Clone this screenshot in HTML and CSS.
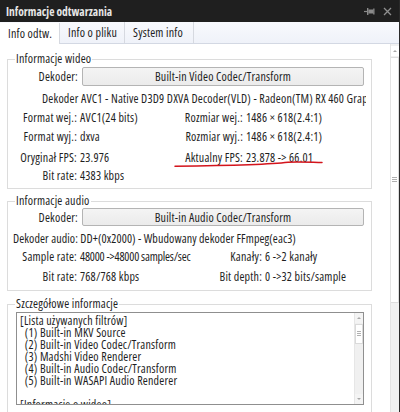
FILE: index.html
```html
<!DOCTYPE html>
<html lang="pl">
<head>
<meta charset="utf-8">
<link rel="stylesheet" href="styles.css">
</head>
<body>
<div class="win">
  <div class="titlebar">
    <span class="title">Informacje odtwarzania</span>
    <span class="tb-icons">
      <svg class="pin" width="12" height="9" viewBox="0 0 12 9"><path d="M0 4.5H3" stroke="#8a8a8a" stroke-width="1.2"/><rect x="3" y="1" width="1.4" height="7" fill="#8a8a8a"/><rect x="4.4" y="2.5" width="5" height="4" fill="#8a8a8a"/><rect x="9.2" y="1.5" width="1.3" height="6" fill="#8a8a8a"/></svg>
      <svg class="close" width="9" height="9" viewBox="0 0 9 9"><path d="M1 1L8 8M8 1L1 8" stroke="#8f8f8f" stroke-width="1.3"/></svg>
    </span>
  </div>
  <div class="tabs">
    <div class="tab active">Info odtw.</div>
    <div class="tab">Info o pliku</div>
    <div class="tab">System info</div>
    <div class="tab-fill"></div>
  </div>
  <div class="main">
    <div class="content">
      <fieldset class="group video">
        <legend>Informacje wideo</legend>
        <div class="dec-row">
          <span class="dec-lbl">Dekoder:</span>
          <div class="btn">Built-in Video Codec/Transform</div>
        </div>
        <div class="line-full vline">Dekoder AVC1 - Native D3D9 DXVA Decoder(VLD) - Radeon(TM) RX 460 Graphics</div>
        <div class="pair">
          <div class="cell-l"><span class="lbl">Format wej.:</span><span class="val">AVC1(24 bits)</span></div>
          <div class="cell-r v"><span class="lbl">Rozmiar wej.:</span><span class="val">1486 × 618(2.4:1)</span></div>
        </div>
        <div class="pair">
          <div class="cell-l"><span class="lbl">Format wyj.:</span><span class="val">dxva</span></div>
          <div class="cell-r v"><span class="lbl">Rozmiar wyj.:</span><span class="val">1486 × 618(2.4:1)</span></div>
        </div>
        <div class="pair fps">
          <div class="cell-l"><span class="lbl">Oryginał FPS:</span><span class="val">23.976</span></div>
          <div class="cell-r v"><span class="lbl">Aktualny FPS:</span><span class="val">23.878 -&gt; 66.01</span></div>
        </div>
        <div class="pair short">
          <div class="cell-l"><span class="lbl">Bit rate:</span><span class="val">4383 kbps</span></div>
        </div>
      </fieldset>

      <fieldset class="group audio">
        <legend>Informacje audio</legend>
        <div class="dec-row a">
          <span class="dec-lbl">Dekoder:</span>
          <div class="btn">Built-in Audio Codec/Transform</div>
        </div>
        <div class="line-full aline">Dekoder audio: DD+(0x2000) - Wbudowany dekoder FFmpeg(eac3)</div>
        <div class="pair short">
          <div class="cell-l"><span class="lbl">Sample rate:</span><span class="val tight">48000 -&gt;48000 samples/sec</span></div>
          <div class="cell-r au"><span class="lbl">Kanały:</span><span class="val">6 -&gt;2 kanały</span></div>
        </div>
        <div class="pair short last">
          <div class="cell-l"><span class="lbl">Bit rate:</span><span class="val">768/768 kbps</span></div>
          <div class="cell-r au"><span class="lbl">Bit depth:</span><span class="val">0 -&gt;32 bits/sample</span></div>
        </div>
      </fieldset>

      <fieldset class="group details">
        <legend>Szczegółowe informacje</legend>
        <div class="listbox">
          <div class="list-text">[Lista używanych filtrów]
  (1) Built-in MKV Source
  (2) Built-in Video Codec/Transform
  (3) Madshi Video Renderer
  (4) Built-in Audio Codec/Transform
  (5) Built-in WASAPI Audio Renderer

[Informacje o wideo]</div>
          <div class="lscroll">
            <div class="arrow up"></div>
            <div class="lthumb"><span class="grip"></span></div>
            <div class="ltrack"></div>
            <div class="arrow down"></div>
          </div>
        </div>
      </fieldset>

      <svg class="underline" width="160" height="14" viewBox="0 0 160 14"><path d="M5 11.2 C 60 10.5, 100 9.5, 118 7.2 C 130 6.6, 142 7.4, 152 7.6" fill="none" stroke="#d3141c" stroke-width="1.5" stroke-linecap="round"/></svg>
    </div>
    <div class="vscroll">
      <div class="arrow up"></div>
      <div class="thumb"><span class="grip"></span></div>
      <div class="track"></div>
    </div>
  </div>
</div>
</body>
</html>
```
FILE: styles.css
```css
* { box-sizing: border-box; }
html, body { margin: 0; padding: 0; }
body {
  width: 400px;
  height: 412px;
  overflow: hidden;
  font-family: "Open Sans", "Noto Sans", sans-serif;
  font-size: 12px;
  font-stretch: 75%;
  letter-spacing: 0.2px;
  color: #1e1e1e;
  background: #fff;
}
.win {
  width: 400px;
  height: 412px;
  display: flex;
  flex-direction: column;
  border-right: 1px solid #2a2a2a;
  overflow: hidden;
}
.titlebar {
  height: 22px;
  flex: none;
  background: #1f1f1f;
  color: #e6e6e6;
  display: flex;
  align-items: center;
  justify-content: space-between;
  padding: 0 7px 0 6px;
}
.title { font-weight: 700; font-size: 11.5px; letter-spacing: 0; }
.tb-icons { display: flex; align-items: center; gap: 7px; }
.tabs {
  height: 22px;
  flex: none;
  display: flex;
  background: linear-gradient(#f8f9fd, #eff2f9);
  border-bottom: 1px solid #d3d8e3;
}
.tab {
  display: flex;
  align-items: center;
  padding: 0 0 0 8px;
  border-right: 1px solid #d6d9e0;
  color: #222;
}
.tab:nth-child(1) { width: 60px; }
.tab:nth-child(2) { width: 65px; }
.tab:nth-child(3) { width: 69px; }
.tab.active {
  background: #fff;
  margin-bottom: -1px;
  margin-top: 1px;
}
.tab-fill { flex: 1; }
.main { flex: 1; display: flex; min-height: 0; }
.content {
  flex: 1;
  position: relative;
  padding: 8px 0 0 7px;
  overflow: hidden;
}
.group {
  width: 365px;
  margin: 0;
  padding: 0;
  border: 1px solid #dcdcdc;
  min-width: 0;
}
.group legend {
  margin-left: 7px;
  padding: 0 1px;
  line-height: 14px;
  color: #1e1e1e;
}
.audio { margin-top: 5px; }
.details { margin-top: 6px; }

.dec-row { display: flex; align-items: center; margin-top: 1px; height: 19px; }
.dec-row.a { margin-top: 0; height: 18px; }
.dec-lbl { width: 70px; flex: none; text-align: right; margin-right: 4px; }
.btn {
  width: 282px;
  flex: none;
  height: 100%;
  border: 1px solid #b4b4b4;
  border-radius: 2px;
  background: linear-gradient(#f4f4f4, #ebebeb);
  display: flex;
  align-items: center;
  justify-content: center;
  color: #1e1e1e;
}
.line-full {
  white-space: nowrap;
  overflow: hidden;
  display: flex;
  align-items: center;
}
.vline { margin-top: 3px; height: 19px; padding-left: 34px; width: 358px; }
.aline { margin-top: 3px; height: 18px; padding-left: 5px; letter-spacing: 0.1px; }

.pair { display: flex; align-items: center; height: 19px; white-space: nowrap; }
.pair.fps { margin-top: 2px; height: 18px; }
.pair.short { height: 18px; }
.video .pair.short { margin-bottom: 4px; }
.pair.last { margin-top: 2px; margin-bottom: 5px; }
.cell-l { width: 152px; flex: none; display: flex; }
.cell-l .lbl { width: 69px; flex: none; text-align: right; margin-right: 3px; }
.cell-r { display: flex; flex: none; }
.cell-r.v .lbl { width: 83px; flex: none; text-align: right; margin-right: 3px; }
.cell-r.au .lbl { width: 102px; flex: none; text-align: right; margin-right: 3px; }
.val { flex: none; }
.val.tight { letter-spacing: -0.2px; }

.listbox {
  margin: 1px 7px 7px 8px;
  height: 93px;
  border: 1px solid #8f8f8f;
  display: flex;
  overflow: hidden;
}
.list-text {
  flex: 1;
  white-space: pre;
  line-height: 12px;
  padding: 2px 0 0 3px;
  overflow: hidden;
}
.lscroll {
  width: 9px;
  display: flex;
  flex-direction: column;
  background: #f0f0f0;
  border-left: 1px solid #e6e6e6;
}
.arrow { height: 10px; position: relative; background: #f4f4f4; }
.arrow::after {
  content: "";
  position: absolute;
  left: 2px;
  top: 4px;
  border-left: 2px solid transparent;
  border-right: 2px solid transparent;
}
.arrow.up::after { border-bottom: 2px solid #a8a8a8; }
.arrow.down::after { border-top: 2px solid #a8a8a8; }
.lthumb {
  margin-top: 1px;
  height: 20px;
  background: #fff;
  border: 1px solid #dadada;
  position: relative;
}
.grip {
  position: absolute;
  left: 1px;
  right: 1px;
  top: 50%;
  height: 5px;
  margin-top: -3px;
  background: repeating-linear-gradient(#b0b0b0 0 1px, transparent 1px 2px);
}
.ltrack { flex: 1; }

.vscroll {
  width: 9px;
  flex: none;
  display: flex;
  flex-direction: column;
  background: #f1f1f1;
  border-left: 1px solid #e4e4e4;
}
.vscroll .arrow { background: #fff; margin-top: 2px; }
.thumb {
  margin-top: 1px;
  height: 246px;
  background: #fff;
  border: 1px solid #dedede;
  border-left: none;
  position: relative;
}
.track { flex: 1; }

.underline {
  position: absolute;
  left: 170px;
  top: 111px;
}
```
